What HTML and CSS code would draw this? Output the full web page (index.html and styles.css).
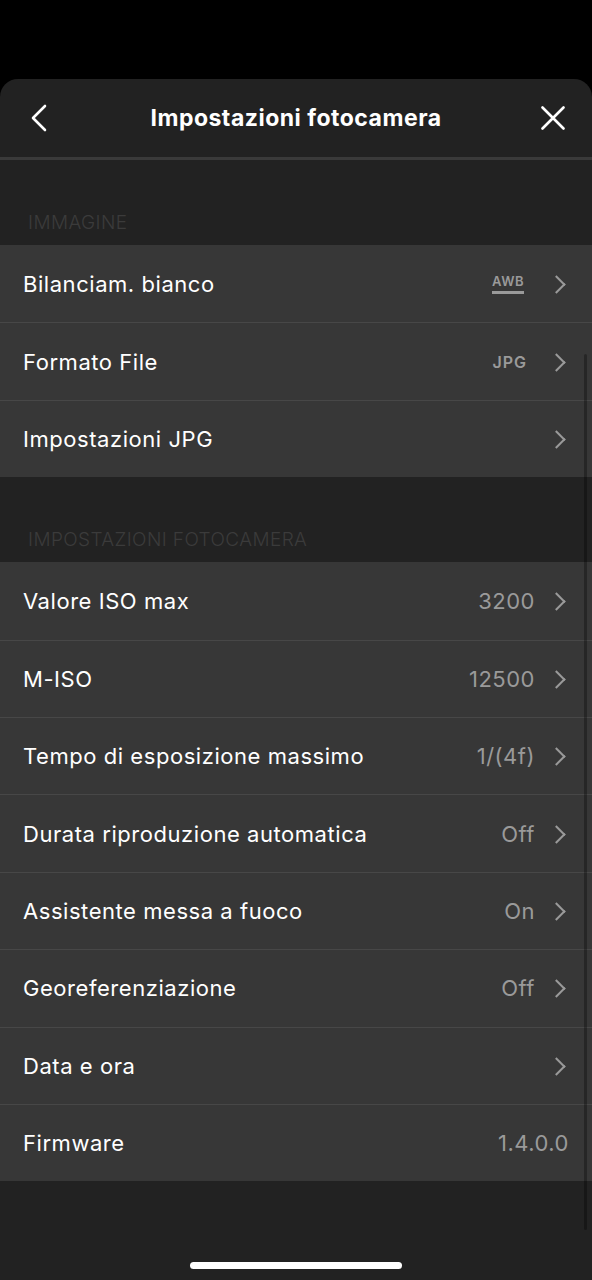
FILE: index.html
```html
<!DOCTYPE html>
<html lang="it">
<head>
    <meta charset="UTF-8">
    <meta name="viewport" content="width=device-width, initial-scale=1.0">
    <title>Impostazioni fotocamera</title>
    <link rel="stylesheet" href="styles.css">
</head>
<body>
    <div class="sheet">
        <header class="topbar">
            <button class="icon-btn" aria-label="Indietro">
                <svg width="18" height="28" viewBox="0 0 18 28"><path d="M15 2 L3 14 L15 26" fill="none" stroke="#fff" stroke-width="2.6" stroke-linecap="round" stroke-linejoin="round"/></svg>
            </button>
            <h1>Impostazioni fotocamera</h1>
            <button class="icon-btn" aria-label="Chiudi">
                <svg width="24" height="24" viewBox="0 0 24 24"><path d="M1.5 1.5 L22.5 22.5 M22.5 1.5 L1.5 22.5" fill="none" stroke="#fff" stroke-width="2.6" stroke-linecap="round"/></svg>
            </button>
        </header>

        <div class="content">
            <div class="section-title">IMMAGINE</div>
            <ul class="list">
                <li class="row">
                    <span class="label">Bilanciam. bianco</span>
                    <span class="value awb">AWB</span>
                    <span class="chev"></span>
                </li>
                <li class="row">
                    <span class="label">Formato File</span>
                    <span class="value jpg">JPG</span>
                    <span class="chev"></span>
                </li>
                <li class="row">
                    <span class="label">Impostazioni JPG</span>
                    <span class="chev"></span>
                </li>
            </ul>

            <div class="section-title">IMPOSTAZIONI FOTOCAMERA</div>
            <ul class="list">
                <li class="row">
                    <span class="label">Valore ISO max</span>
                    <span class="value">3200</span>
                    <span class="chev"></span>
                </li>
                <li class="row">
                    <span class="label">M-ISO</span>
                    <span class="value">12500</span>
                    <span class="chev"></span>
                </li>
                <li class="row">
                    <span class="label">Tempo di esposizione massimo</span>
                    <span class="value">1/(4f)</span>
                    <span class="chev"></span>
                </li>
                <li class="row">
                    <span class="label">Durata riproduzione automatica</span>
                    <span class="value">Off</span>
                    <span class="chev"></span>
                </li>
                <li class="row">
                    <span class="label">Assistente messa a fuoco</span>
                    <span class="value">On</span>
                    <span class="chev"></span>
                </li>
                <li class="row">
                    <span class="label">Georeferenziazione</span>
                    <span class="value">Off</span>
                    <span class="chev"></span>
                </li>
                <li class="row">
                    <span class="label">Data e ora</span>
                    <span class="chev"></span>
                </li>
                <li class="row">
                    <span class="label">Firmware</span>
                    <span class="value">1.4.0.0</span>
                </li>
            </ul>
            <div class="scrollbar"></div>
        </div>
        <div class="home-indicator"></div>
    </div>
</body>
</html>
```

FILE: styles.css
```css
body {
    margin: 0;
    background-color: #000;
    font-family: Inter, "Noto Sans", sans-serif;
    color: #fff;
}
.sheet {
    margin-top: 79px;
    height: 1201px;
    background-color: #222222;
    border-radius: 18px 18px 0 0;
    display: flex;
    flex-direction: column;
    position: relative;
    overflow: hidden;
}
.topbar {
    height: 78px;
    display: flex;
    align-items: center;
    justify-content: space-between;
    padding: 0 22px 0 22px;
    border-bottom: 3px solid #3a3a3a;
}
.topbar h1 {
    margin: 0;
    font-size: 23px;
    font-weight: 700;
    letter-spacing: 0.5px;
}
.icon-btn {
    background: none;
    border: none;
    padding: 4px;
    width: 34px;
    height: 34px;
    display: flex;
    align-items: center;
    justify-content: center;
    cursor: pointer;
}
.content {
    position: relative;
    flex: 1;
}
.section-title {
    height: 85px;
    box-sizing: border-box;
    padding: 0 28px 11px;
    display: flex;
    align-items: flex-end;
    font-size: 19px;
    font-weight: 300;
    letter-spacing: 0.4px;
    color: #3b3b3b;
}
.list {
    list-style: none;
    margin: 0;
    padding: 0;
    background-color: #373737;
}
.row {
    height: 77.4px;
    box-sizing: border-box;
    display: flex;
    align-items: center;
    padding: 0 23px;
    border-top: 1px solid #474747;
}
.row:first-child {
    border-top: none;
}
.label {
    flex: 1;
    font-size: 22px;
    letter-spacing: 0.55px;
}
.value {
    font-size: 22px;
    letter-spacing: 0.5px;
    color: #9a9a9a;
}
.chev {
    width: 24px;
    height: 24px;
    margin-left: 12px;
    margin-right: -2px;
    position: relative;
}
.chev::after {
    content: "";
    position: absolute;
    left: 3px;
    top: 6px;
    width: 11px;
    height: 11px;
    border-top: 2px solid #9a9a9a;
    border-right: 2px solid #9a9a9a;
    transform: rotate(45deg);
}
.awb {
    font-size: 13px;
    font-weight: 600;
    letter-spacing: 0.5px;
    padding-bottom: 3px;
    border-bottom: 3px solid #9a9a9a;
    line-height: 14px;
    margin-right: 11px;
}
.jpg {
    font-size: 16px;
    font-weight: 600;
    letter-spacing: 1px;
    margin-right: 8px;
}
.scrollbar {
    position: absolute;
    right: 5px;
    top: 194px;
    width: 3px;
    height: 876px;
    border-radius: 2px;
    background-color: rgba(0, 0, 0, 0.3);
}
.home-indicator {
    position: absolute;
    left: 190px;
    bottom: 11px;
    width: 212px;
    height: 7px;
    border-radius: 4px;
    background-color: #fff;
}
```
